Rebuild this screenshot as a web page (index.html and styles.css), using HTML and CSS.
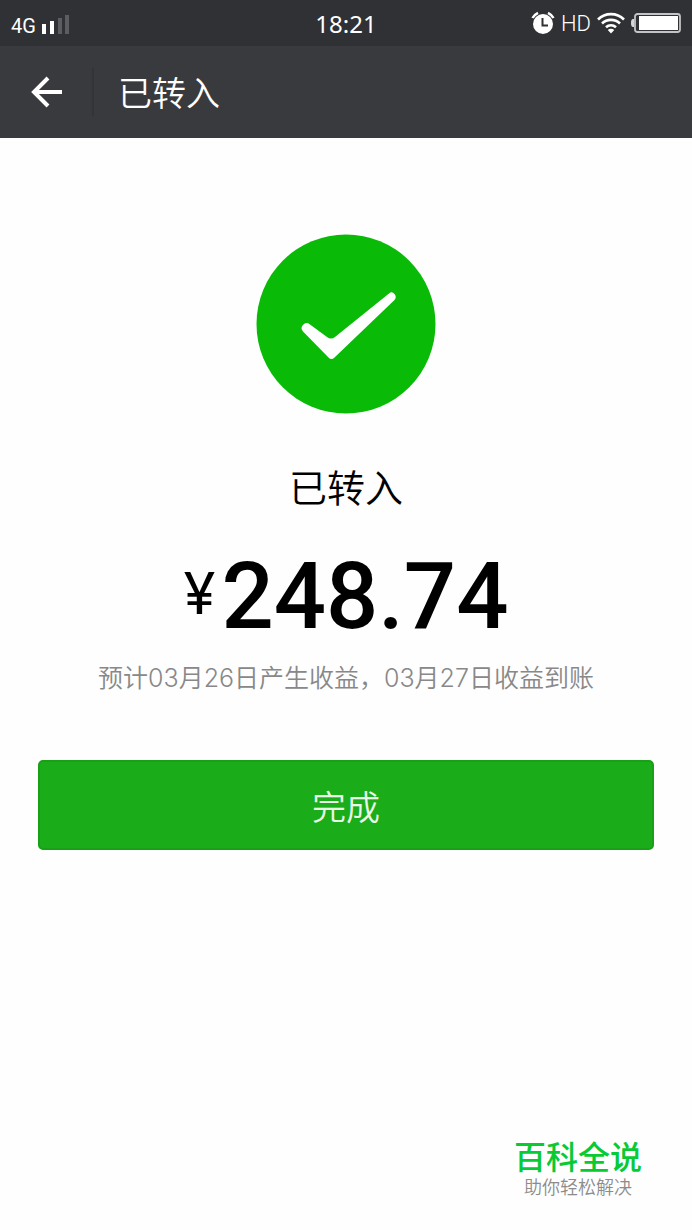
FILE: index.html
```html
<!DOCTYPE html>
<html lang="zh-CN">
<head>
    <meta charset="UTF-8">
    <meta name="viewport" content="width=device-width, initial-scale=1.0">
    <title>已转入</title>
    <link rel="stylesheet" href="styles.css">
</head>
<body>
    <div class="status-bar">
        <div class="status-left">
            <span class="network">4G</span>
            <svg class="signal" width="28" height="20" viewBox="0 0 28 20" aria-hidden="true">
                <rect x="0" y="10" width="4" height="10" fill="#fff"/>
                <rect x="8" y="7" width="4" height="13" fill="#fff"/>
                <rect x="16" y="4" width="4" height="16" fill="#5c5d60"/>
                <rect x="23" y="1" width="4" height="19" fill="#5c5d60"/>
            </svg>
        </div>
        <time class="clock">18:21</time>
        <div class="status-right">
            <svg width="24" height="24" viewBox="0 0 24 24" aria-hidden="true">
                <circle cx="12" cy="13" r="10" fill="#fff"/>
                <path d="M1.5 7A12 12 0 0 1 7 1.800M17 1.800A12 12 0 0 1 22.500 7" fill="none" stroke="#fff" stroke-width="2.500"/>
                <path d="M11.500 7v7.500h5.500" fill="none" stroke="#303134" stroke-width="2"/>
            </svg>
            <span class="hd">HD</span>
            <svg class="wifi" width="28" height="22" viewBox="0 0 28 22" fill="none" stroke="#fff" stroke-width="2.600" aria-hidden="true">
                <path d="M1 7.500a18.500 18.500 0 0 1 26 0"/>
                <path d="M5 11.500a13 13 0 0 1 18 0"/>
                <path d="M9 15.300a7.300 7.300 0 0 1 10 0"/>
                <path d="M14 21.500l-3.200-3.400a4.600 4.600 0 0 1 6.400 0z" fill="#fff" stroke="none"/>
            </svg>
            <svg class="battery" width="50" height="20" viewBox="0 0 50 20" aria-hidden="true">
                <path d="M3 6H2Q0 6 0 10t2 4h1z" fill="#d6d6d6"/>
                <rect x="4" y="1" width="45" height="18" rx="2.500" fill="none" stroke="#c4c4c6" stroke-width="1.800"/>
                <rect x="8" y="3" width="39" height="14" fill="#fff"/>
            </svg>
        </div>
    </div>

    <header class="nav-bar">
        <button class="back" type="button" aria-label="返回">
            <svg width="32" height="32" viewBox="0 0 32 32" fill="none" stroke="#fff" stroke-width="4" aria-hidden="true">
                <path d="M18 2L4 16l14 14M4 16h28"/>
            </svg>
        </button>
        <h1>已转入</h1>
    </header>

    <main>
        <svg class="success-icon" width="180" height="180" viewBox="0 0 180 180" aria-hidden="true">
            <circle cx="90" cy="90" r="89.500" fill="#09bb07"/>
            <path d="M47 97.500Q44 94 47 91Q50 87.500 54 90.500L71 103Q75 106 79 103L133 59.500Q136 57 138.500 60Q141 63 138.500 66L78.500 123.500Q75.500 126.500 72.500 123.500Z" fill="#fff"/>
        </svg>
        <h2>已转入</h2>
        <p class="amount"><span class="currency">¥</span>248.74</p>
        <p class="notice">预计03月26日产生收益，03月27日收益到账</p>
        <button class="done" type="button">完成</button>
    </main>

    <footer>
        <div class="brand">
            <strong>百科全说</strong>
            <span>助你轻松解决</span>
        </div>
    </footer>
</body>
</html>
```
FILE: styles.css
```css
* {
    box-sizing: border-box;
    margin: 0;
    padding: 0;
}

body {
    font-family: 'Noto Sans CJK SC', sans-serif;
    min-height: 100vh;
    display: flex;
    flex-direction: column;
    background-color: #fefefe;
    color: #000;
}

.status-bar {
    display: grid;
    grid-template-columns: 1fr auto 1fr;
    align-items: center;
    height: 46px;
    padding: 0 11px;
    background-color: #303134;
    color: #fff;
    font-family: Roboto, sans-serif;
}

.status-left, .status-right {
    display: flex;
    align-items: center;
}

.status-left {
    gap: 6px;
    padding-top: 6px;
}

.status-right {
    justify-content: flex-end;
    gap: 6px;
}

.network {
    font-size: 20px;
}

.signal {
    margin-bottom: 4px;
}

.clock {
    font-family: 'Noto Sans', sans-serif;
    font-size: 24px;
}

.hd {
    font-size: 22px;
    font-weight: 300;
}

.nav-bar {
    display: flex;
    align-items: center;
    height: 92px;
    background-color: #393a3e;
    color: #fff;
}

.back {
    display: flex;
    align-items: center;
    height: 48px;
    padding: 0 30px;
    border: none;
    border-right: 2px solid #333437;
    background: none;
    cursor: pointer;
}

h1 {
    padding-left: 24px;
    font-size: 34px;
    font-weight: 350;
    line-height: 48px;
}

main {
    display: flex;
    flex-direction: column;
    align-items: center;
    padding: 96px 38px 0;
}

h2 {
    margin-top: 44px;
    font-size: 38px;
    font-weight: 350;
    line-height: 56px;
}

.amount {
    margin-top: 28px;
    font-family: Roboto, sans-serif;
    font-size: 92px;
    font-weight: 500;
    line-height: 110px;
}

.currency {
    margin-right: 6px;
    font-family: Inter, sans-serif;
    font-size: 58px;
    font-weight: 400;
    vertical-align: 14px;
    line-height: 1;
}

.notice {
    margin-top: 8px;
    color: #888;
    font-family: Inter, 'Noto Sans CJK SC', sans-serif;
    font-size: 25px;
    font-weight: 350;
    line-height: 36px;
}

.done {
    width: 100%;
    height: 90px;
    margin-top: 64px;
    border: 2px solid #18a016;
    border-radius: 5px;
    background-color: #1aad19;
    color: #e8f7e8;
    font-family: inherit;
    font-size: 34px;
    font-weight: 350;
    cursor: pointer;
}

footer {
    display: flex;
    justify-content: flex-end;
    margin-top: auto;
    padding: 0 50px 30px;
}

.brand {
    display: flex;
    flex-direction: column;
    align-items: center;
    font-family: Roboto, 'Noto Sans CJK SC', sans-serif;
}

.brand strong {
    color: #07ca35;
    font-size: 32px;
    font-weight: 500;
    line-height: 36px;
}

.brand span {
    color: #8c8c8c;
    font-size: 18px;
    font-weight: 350;
    line-height: 24px;
}
```
